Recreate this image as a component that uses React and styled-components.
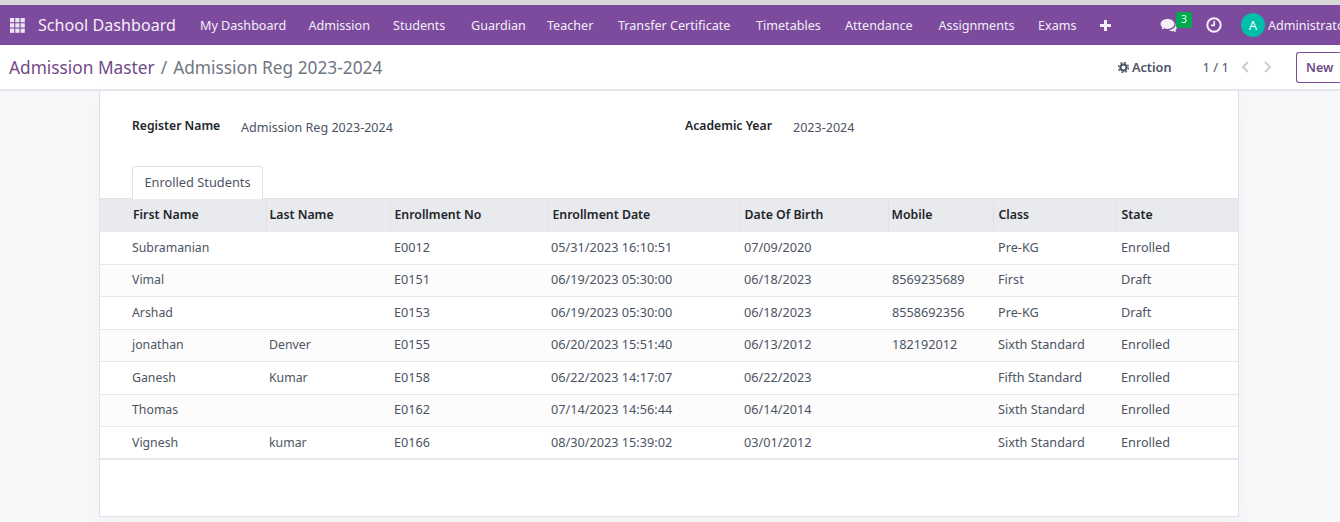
import React from "react";
import styled, { createGlobalStyle } from "styled-components";

const Global = createGlobalStyle`
  html, body { margin: 0; padding: 0; background: #fff; overflow: hidden; }
  body { font-family: "Noto Sans", "Open Sans", sans-serif; font-size: 13px; color: #4c5463; }
  * { box-sizing: border-box; }
`;
const Page = styled.div`
  width: 1340px; height: 522px; overflow: hidden; display: flex; flex-direction: column;
  border-top: 5px solid #d9d9da; background: #f7f8fa;
`;
const Navbar = styled.nav`
  height: 40px; flex: none; background: #7c4b9d; color: #f3eef7; display: flex; align-items: center;
  padding-left: 10px; white-space: nowrap;
`;
const Apps = styled.svg` width: 15px; height: 15px; fill: #ede6f2; flex: none; `;
const Brand = styled.span` font-size: 16.15px; margin-left: 13px; width: 162px; flex: none; `;
const Menu = styled.div`
  display: grid; font-size: 12.58px;
  grid-template-columns: 108.5px 84.5px 78px 76px 71px 138px 89px 93.5px 99.5px 38px;
`;
const MenuItem = styled.span` flex: none; `;
const NavIcon = styled.svg` flex: none; display: block; `;
const Plus = styled(NavIcon)` margin-left: 24px; `;
const Chat = styled.div` position: relative; margin-left: 49px; width: 18px; `;
const Badge = styled.span`
  position: absolute; left: 16px; top: -6px; width: 16px; height: 16px; border-radius: 2px; background: #00a84f;
  color: #eafff2; font-size: 10.5px; line-height: 15px; text-align: center;
`;
const Clock = styled(NavIcon)` margin-left: 28px; `;
const Avatar = styled.span`
  width: 24px; height: 24px; border-radius: 50%; background: #00bfa8; color: #f2fffc; margin-left: 19px; flex: none;
  display: flex; align-items: center; justify-content: center; font-size: 13px;
`;
const User = styled.span` margin-left: 3px; font-size: 12.58px; `;
const Control = styled.header`
  height: 46px; flex: none; background: #fff; border-bottom: 2px solid #e5e7ec; display: flex; align-items: center; padding: 0 0 0 9px;
`;
const Crumbs = styled.div` font-size: 17.3px; flex: 1; color: #6f7682; white-space: nowrap; `;
const CrumbLink = styled.span` color: #714b87; `;
const Slash = styled.span` margin: 0 6px; `;
const ActionBtn = styled.span` display: flex; align-items: center; gap: 3px; font-weight: 600; color: #4c5463; font-size: 12.7px; `;
const Pager = styled.span` margin-left: 31px; color: #4c5463; font-size: 13px; `;
const Arrows = styled.span` display: flex; gap: 13px; margin-left: 12px; `;
const NewBtn = styled.span`
  margin-left: 24px; width: 44px; height: 31px; border: 1px solid #7c4b9d; border-right: none; border-radius: 3px 0 0 3px; color: #714b87;
  font-weight: 600; font-size: 12.5px; display: flex; align-items: center; padding-left: 9px; flex: none; overflow: hidden;
`;
const Body = styled.main` flex: 1; display: flex; justify-content: center; padding: 0 101px 5px 99px; min-height: 0; `;
const Sheet = styled.section`
  flex: 1; background: #fff; border: 1px solid #dfe2e8; border-top: none; box-shadow: 0 5px 20px rgba(0,0,0,.03); display: flex; flex-direction: column;
`;
const Fields = styled.div` display: grid; grid-template-columns: 553px 1fr; padding: 27px 0 0 32px; height: 75px; `;
const Field = styled.div` display: flex; align-items: flex-start; `;
const Label = styled.span` font-weight: 600; color: #212529; font-size: 12.2px; line-height: 16px; width: ${p => p.$w}px; `;
const Value = styled.span` font-size: 12.55px; line-height: 20px; `;
const Tabs = styled.div` padding-left: 32px; height: 32px; display: flex; `;
const Tab = styled.div`
  width: 131px; height: 33px; border: 1px solid #dee2e6; border-bottom: none; border-radius: 3px 3px 0 0; background: #fff; padding-bottom: 2px;
  display: flex; align-items: center; justify-content: center; font-size: 12.8px; position: relative; z-index: 1;
`;
const Table = styled.table` width: 1138px; border-collapse: collapse; table-layout: fixed; border-bottom: 2px solid #e7e8ec; `;
const Th = styled.th`
  height: 33px; padding: 0 0 2px ${p => p.$pad}px; background: #e9eaee; border-left: ${p => p.$first ? "none" : "1px solid #e0e2e7"};
  border-top: 1px solid #e0e2e7;
  font-size: 12.3px; font-weight: 600; color: #212529; text-align: left;
`;
const Tr = styled.tr` height: 32.5px; border-bottom: 1px solid #e7e8ec; background: ${p => p.$odd ? "#fff" : "#fcfcfc"}; &:last-child { border-bottom: none; } `;
const Td = styled.td` padding: 0 0 ${p => p.$name ? 1 : 2}px ${p => p.$pad}px; font-size: ${p => p.$name ? 12.3 : 12.7}px; white-space: nowrap; `;

const nav = ["My Dashboard","Admission","Students","Guardian","Teacher","Transfer Certificate","Timetables","Attendance","Assignments","Exams"];
const cols = [["First Name",166,33,32],["Last Name",124,3,3],["Enrollment No",158,4,4],["Enrollment Date",192,4,3],["Date Of Birth",148,4,4],["Mobile",105,3,4],["Class",123,5,5],["State",122,5,5]];
const rows = [
  ["Subramanian","","E0012","05/31/2023 16:10:51","07/09/2020","","Pre-KG","Enrolled"],
  ["Vimal","","E0151","06/19/2023 05:30:00","06/18/2023","8569235689","First","Draft"],
  ["Arshad","","E0153","06/19/2023 05:30:00","06/18/2023","8558692356","Pre-KG","Draft"],
  ["jonathan","Denver","E0155","06/20/2023 15:51:40","06/13/2012","182192012","Sixth Standard","Enrolled"],
  ["Ganesh","Kumar","E0158","06/22/2023 14:17:07","06/22/2023","","Fifth Standard","Enrolled"],
  ["Thomas","","E0162","07/14/2023 14:56:44","06/14/2014","","Sixth Standard","Enrolled"],
  ["Vignesh","kumar","E0166","08/30/2023 15:39:02","03/01/2012","","Sixth Standard","Enrolled"],
];

export default function App() {
  return (
    <Page>
      <Global />
      <Navbar>
        <Apps viewBox="0 0 15 15">
          {[0,5.3,10.6].flatMap(x => [0,5.3,10.6].map(y => <rect key={x+"-"+y} x={x} y={y} width="4.2" height="4.2" />))}
        </Apps>
        <Brand>School Dashboard</Brand>
        <Menu>{nav.map(n => <MenuItem key={n}>{n}</MenuItem>)}</Menu>
        <Plus width="11" height="11" viewBox="0 0 11 11"><path d="M4 0h3v4h4v3H7v4H4V7H0V4h4z" fill="#f3eef7" /></Plus>
        <Chat>
          <NavIcon width="18" height="15" viewBox="0 0 18 15">
            <path d="M7.5 1C3.6 1 .6 3.2.6 6c0 1.3.7 2.5 1.8 3.4-.2.8-.7 1.5-1.3 2.1 1.3 0 2.5-.5 3.4-1.2 1 .4 2 .6 3 .6 3.9 0 6.9-2.2 6.9-4.9S11.4 1 7.5 1z" fill="#f3eef7" />
            <path d="M15.6 5.6c.1.3.1.6.1.9 0 3-3 5.4-7 5.6.9.7 2.1 1.1 3.4 1.1.6 0 1.2-.1 1.7-.3.7.6 1.6.9 2.6 1-.5-.5-.8-1-1-1.7.9-.7 1.4-1.6 1.4-2.7 0-1.5-.1-3-.8-3.9z" fill="#f3eef7" />
          </NavIcon>
          <Badge>3</Badge>
        </Chat>
        <Clock width="16" height="16" viewBox="0 0 16 16" fill="none" stroke="#f3eef7">
          <circle cx="8" cy="8" r="6.7" strokeWidth="2" /><path d="M8.2 4v4.4H5" strokeWidth="1.6" />
        </Clock>
        <Avatar>A</Avatar>
        <User>Administrator</User>
      </Navbar>
      <Control>
        <Crumbs><CrumbLink>Admission Master</CrumbLink><Slash>/</Slash>Admission Reg 2023-2024</Crumbs>
        <ActionBtn>
          <svg width="11" height="11" viewBox="0 0 11 11"><circle cx="5.5" cy="5.5" r="3.1" fill="none" stroke="#4c5463" strokeWidth="2.2" /><circle cx="5.5" cy="5.5" r="5" fill="none" stroke="#4c5463" strokeWidth="1.3" strokeDasharray="2 1.93" /></svg>
          Action
        </ActionBtn>
        <Pager>1 / 1</Pager>
        <Arrows>
          <svg width="9" height="12" viewBox="0 0 9 12" fill="none" stroke="#c9cdd3" strokeWidth="2"><path d="M7 1 2 6l5 5" /></svg>
          <svg width="9" height="12" viewBox="0 0 9 12" fill="none" stroke="#c9cdd3" strokeWidth="2"><path d="m2 1 5 5-5 5" /></svg>
        </Arrows>
        <NewBtn>New</NewBtn>
      </Control>
      <Body>
        <Sheet>
          <Fields>
            <Field><Label $w={109}>Register Name</Label><Value>Admission Reg 2023-2024</Value></Field>
            <Field><Label $w={108}>Academic Year</Label><Value>2023-2024</Value></Field>
          </Fields>
          <Tabs><Tab>Enrolled Students</Tab></Tabs>
          <Table>
            <colgroup>{cols.map(c => <col key={c[0]} style={{ width: c[1] }} />)}</colgroup>
            <thead><tr>{cols.map((c, i) => <Th key={c[0]} $pad={c[2]} $first={i === 0}>{c[0]}</Th>)}</tr></thead>
            <tbody>
              {rows.map((r, i) => (
                <Tr key={i} $odd={i % 2 === 0}>
                  {r.map((v, j) => <Td key={j} $name={j < 2} $pad={cols[j][3]}>{v}</Td>)}
                </Tr>
              ))}
            </tbody>
          </Table>
        </Sheet>
      </Body>
    </Page>
  );
}
